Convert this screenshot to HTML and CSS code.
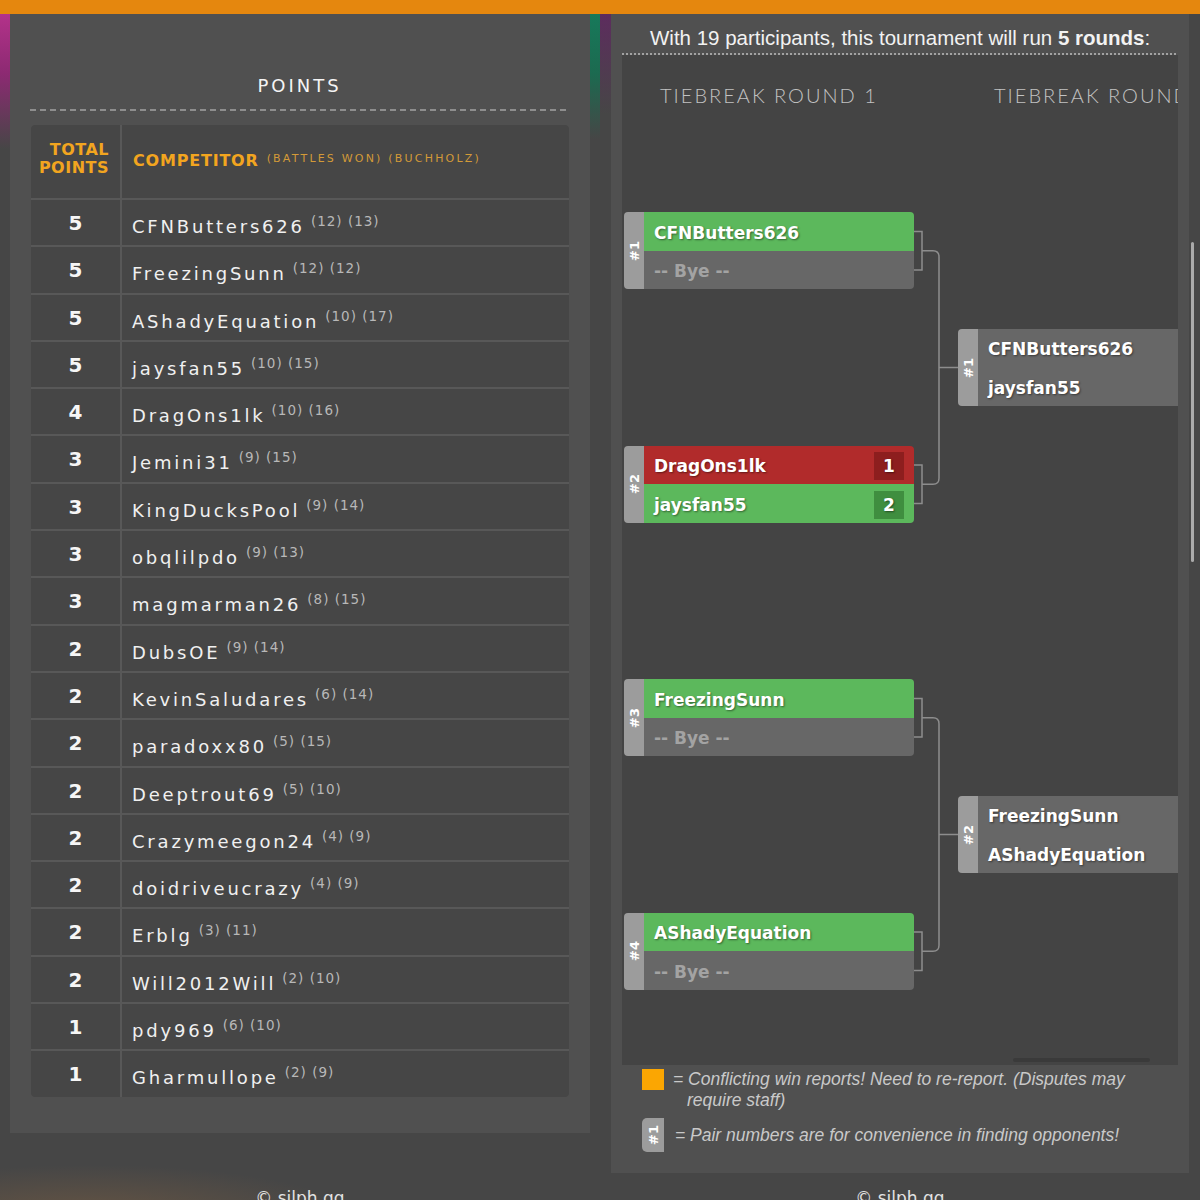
FILE: index.html
```html
<!DOCTYPE html>
<html lang="en">
<head>
<meta charset="utf-8">
<title>Tiebreak standings</title>
<link rel="stylesheet" href="styles.css">
</head>
<body>
<div class="topbar"></div>
<main class="page">
  <section class="panel points-panel">
    <h2 class="points-title">POINTS</h2>
    <div class="dash-rule"></div>
    <div class="standings">
      <div class="cell head-total">TOTAL<br>POINTS</div>
      <div class="cell head-comp"><span class="comp-label">COMPETITOR</span><span class="comp-sub">(BATTLES WON) (BUCHHOLZ)</span></div>

      <div class="cell pts">5</div><div class="cell name">CFNButters626<span class="tb">(12) (13)</span></div>
      <div class="cell pts">5</div><div class="cell name">FreezingSunn<span class="tb">(12) (12)</span></div>
      <div class="cell pts">5</div><div class="cell name">AShadyEquation<span class="tb">(10) (17)</span></div>
      <div class="cell pts">5</div><div class="cell name">jaysfan55<span class="tb">(10) (15)</span></div>
      <div class="cell pts">4</div><div class="cell name">DragOns1lk<span class="tb">(10) (16)</span></div>
      <div class="cell pts">3</div><div class="cell name">Jemini31<span class="tb">(9) (15)</span></div>
      <div class="cell pts">3</div><div class="cell name">KingDucksPool<span class="tb">(9) (14)</span></div>
      <div class="cell pts">3</div><div class="cell name">obqlilpdo<span class="tb">(9) (13)</span></div>
      <div class="cell pts">3</div><div class="cell name">magmarman26<span class="tb">(8) (15)</span></div>
      <div class="cell pts">2</div><div class="cell name">DubsOE<span class="tb">(9) (14)</span></div>
      <div class="cell pts">2</div><div class="cell name">KevinSaludares<span class="tb">(6) (14)</span></div>
      <div class="cell pts">2</div><div class="cell name">paradoxx80<span class="tb">(5) (15)</span></div>
      <div class="cell pts">2</div><div class="cell name">Deeptrout69<span class="tb">(5) (10)</span></div>
      <div class="cell pts">2</div><div class="cell name">Crazymeegon24<span class="tb">(4) (9)</span></div>
      <div class="cell pts">2</div><div class="cell name">doidriveucrazy<span class="tb">(4) (9)</span></div>
      <div class="cell pts">2</div><div class="cell name">Erblg<span class="tb">(3) (11)</span></div>
      <div class="cell pts">2</div><div class="cell name">Will2012Will<span class="tb">(2) (10)</span></div>
      <div class="cell pts">1</div><div class="cell name">pdy969<span class="tb">(6) (10)</span></div>
      <div class="cell pts">1</div><div class="cell name">Gharmullope<span class="tb">(2) (9)</span></div>
    </div>
  </section>

  <section class="panel bracket-panel">
    <p class="rounds-note">With 19 participants, this tournament will run <b>5 rounds</b>:</p>
    <div class="dot-rule"></div>
    <div class="bracket">
      <div class="rounds">
        <div class="round r1">
          <h3 class="round-title">TIEBREAK ROUND 1</h3>
          <div class="slot">
            <div class="match">
              <div class="pair"><span>#1</span></div>
              <div class="slots">
                <div class="p win">CFNButters626</div>
                <div class="p bye">-- Bye --</div>
              </div>
            </div>
          </div>
          <div class="slot">
            <div class="match">
              <div class="pair"><span>#2</span></div>
              <div class="slots">
                <div class="p lose">DragOns1lk<span class="score">1</span></div>
                <div class="p win">jaysfan55<span class="score">2</span></div>
              </div>
            </div>
          </div>
          <div class="slot">
            <div class="match">
              <div class="pair"><span>#3</span></div>
              <div class="slots">
                <div class="p win">FreezingSunn</div>
                <div class="p bye">-- Bye --</div>
              </div>
            </div>
          </div>
          <div class="slot">
            <div class="match">
              <div class="pair"><span>#4</span></div>
              <div class="slots">
                <div class="p win">AShadyEquation</div>
                <div class="p bye">-- Bye --</div>
              </div>
            </div>
          </div>
        </div>
        <div class="round r2">
          <h3 class="round-title">TIEBREAK ROUND 2</h3>
          <div class="slot">
            <div class="match">
              <div class="pair"><span>#1</span></div>
              <div class="slots">
                <div class="p">CFNButters626</div>
                <div class="p">jaysfan55</div>
              </div>
            </div>
          </div>
          <div class="slot">
            <div class="match">
              <div class="pair"><span>#2</span></div>
              <div class="slots">
                <div class="p">FreezingSunn</div>
                <div class="p">AShadyEquation</div>
              </div>
            </div>
          </div>
        </div>
      </div>
      <svg class="connectors" width="556" height="1010" viewBox="0 0 556 1010" fill="none" stroke="#8d8d8d" stroke-width="1.5">
        <path d="M292 176.5H300V215H292"/>
        <path d="M292 410H300V448.5H292"/>
        <path d="M300 195.75H311Q317 195.75 317 201.75V423.25Q317 429.25 311 429.25H300"/>
        <path d="M317 312.5H336"/>
        <path d="M292 643.5H300V682H292"/>
        <path d="M292 877H300V915.5H292"/>
        <path d="M300 662.75H311Q317 662.75 317 668.75V890.25Q317 896.25 311 896.25H300"/>
        <path d="M317 779.5H336"/>
      </svg>
      <div class="hscroll"></div>
    </div>
    <div class="legend">
      <div class="legend-item">
        <span class="swatch"></span>
        <span class="legend-text">= Conflicting win reports! Need to re-report. (Disputes may require staff)</span>
      </div>
      <div class="legend-item item-pair">
        <span class="pair-icon"><span>#1</span></span>
        <span class="legend-text">= Pair numbers are for convenience in finding opponents!</span>
      </div>
    </div>
  </section>
</main>
<footer class="footer"><span>© silph.gg</span><span>© silph.gg</span></footer>
<div class="vscroll"></div>
</body>
</html>
```

FILE: styles.css
```css
* { box-sizing: border-box; }

html, body { margin: 0; padding: 0; }

body {
  width: 1200px;
  height: 1200px;
  overflow: hidden;
  position: relative;
  font-family: "DejaVu Sans", sans-serif;
  color: #eeeeee;
  background-color: #464646;
  background-image:
    linear-gradient(to bottom, #b3328a 0px, #8c2a72 60px, rgba(70, 70, 70, 0) 135px),
    linear-gradient(to bottom, #17795a 0px, #1c6a50 60px, rgba(70, 70, 70, 0) 125px),
    linear-gradient(to bottom, #5d2c5e 0px, rgba(70, 70, 70, 0) 100px),
    radial-gradient(ellipse 260px 50px at 90px 1215px, rgba(125, 95, 65, 0.55), rgba(70, 70, 70, 0));
  background-repeat: no-repeat;
  background-position: 0 14px, 590px 14px, 600px 14px, 0 0;
  background-size: 10px 140px, 10px 130px, 11px 110px, 1200px 1200px;
}

.topbar {
  height: 14px;
  background: #e5870e;
}

.page {
  display: flex;
  align-items: flex-start;
  gap: 21px;
  padding-left: 10px;
}

.panel { background: #505050; }

/* ---------- Points panel ---------- */
.points-panel {
  width: 580px;
  height: 1119px;
  padding: 60px 21px 0 20px;
}

.points-title {
  margin: 0;
  text-align: center;
  font-size: 18px;
  line-height: 24px;
  font-weight: normal;
  letter-spacing: 3px;
  color: #f4f4f4;
}

.dash-rule {
  margin-top: 11px;
  height: 2px;
  background: repeating-linear-gradient(to right, #8e8e8e 0 6px, transparent 6px 10px);
}

.standings {
  margin-top: 14px;
  margin-left: 1px;
  width: 538px;
  display: grid;
  grid-template-columns: 89px 1fr;
  grid-template-rows: 73px;
  grid-auto-rows: 45.3px;
  gap: 2px;
  background: #585858;
  border-radius: 4px;
  overflow: hidden;
}

.cell { background: #464646; }

.head-total {
  display: flex;
  align-items: center;
  justify-content: flex-end;
  text-align: right;
  padding-right: 11px;
  padding-bottom: 6px;
  color: #f2a51f;
  font-weight: bold;
  font-size: 16px;
  line-height: 18px;
  letter-spacing: 0.5px;
}

.head-comp {
  display: flex;
  align-items: center;
  padding-left: 11px;
  padding-bottom: 2px;
}

.comp-label {
  color: #f2a51f;
  font-weight: bold;
  font-size: 16px;
  letter-spacing: 0.8px;
}

.comp-sub {
  color: #d39a38;
  font-size: 11px;
  letter-spacing: 2.2px;
  margin-left: 8px;
  position: relative;
  top: -2px;
}

.pts {
  text-align: center;
  line-height: 47px;
  font-weight: bold;
  font-size: 20px;
  color: #f6f6f6;
}

.name {
  padding-left: 10px;
  line-height: 42px;
  font-size: 18px;
  letter-spacing: 2.8px;
  color: #f0f0f0;
  white-space: nowrap;
}

.tb {
  font-size: 13.5px;
  letter-spacing: 1px;
  color: #b8b8b8;
  margin-left: 6px;
  vertical-align: 7px;
}

/* ---------- Bracket panel ---------- */
.bracket-panel {
  width: 578px;
  height: 1159px;
  padding: 12px 11px 0;
}

.rounds-note {
  margin: 0 0 0 28px;
  font-family: "Liberation Sans", Arial, sans-serif;
  font-size: 20.5px;
  line-height: 24px;
  color: #f2f2f2;
  white-space: nowrap;
}

.dot-rule {
  margin-top: 3px;
  height: 2px;
  background: repeating-linear-gradient(to right, #a2a2a2 0 2px, transparent 2px 4px);
}

.bracket {
  position: relative;
  height: 1010px;
  background: #444444;
  overflow: hidden;
}

.rounds {
  display: flex;
  gap: 44px;
  padding-left: 2px;
}

.round {
  width: 290px;
  flex-shrink: 0;
}

.round-title {
  margin: 0;
  height: 79px;
  padding: 28px 0 0 36px;
  font-family: Lato, "DejaVu Sans", sans-serif;
  font-weight: 300;
  font-size: 20px;
  line-height: 24px;
  letter-spacing: 2px;
  color: #c2c2c2;
  white-space: nowrap;
}

.slot {
  display: flex;
  align-items: center;
}

.r1 .slot { height: 233.5px; }
.r2 .slot { height: 467px; }

.match {
  display: flex;
  width: 290px;
  height: 77px;
  border-radius: 4px;
  overflow: hidden;
}

.pair {
  width: 20px;
  flex-shrink: 0;
  background: #9c9c9c;
  display: flex;
  align-items: center;
  justify-content: center;
}

.pair span,
.pair-icon span {
  writing-mode: vertical-rl;
  transform: rotate(180deg);
  font-weight: bold;
  font-size: 13px;
  color: #ffffff;
}

.slots {
  flex: 1;
  display: flex;
  flex-direction: column;
}

.p {
  height: 38.5px;
  display: flex;
  align-items: center;
  justify-content: space-between;
  padding: 0 10px 0 10px;
  padding-top: 2px;
  background: #676767;
  font-weight: bold;
  font-size: 17px;
  color: #ffffff;
  text-shadow: 1px 1px 2px rgba(0, 0, 0, 0.45);
  white-space: nowrap;
}

.p.win { background: #5cb85c; }
.p.lose { background: #b12b2b; }
.p.bye { color: #a3a3a3; text-shadow: none; }

.score {
  width: 30px;
  height: 28px;
  display: flex;
  align-items: center;
  justify-content: center;
}

.lose .score { background: #8d1e1e; }
.win .score { background: #3f8e3f; }

.connectors {
  position: absolute;
  top: 0;
  left: 0;
  pointer-events: none;
}

.hscroll {
  position: absolute;
  left: 391px;
  top: 1003px;
  width: 137px;
  height: 4px;
  border-radius: 2px;
  background: #3a3a3a;
}

/* ---------- Legend ---------- */
.legend {
  padding: 4px 0 0 20px;
  width: 514px;
  font-family: "Liberation Sans", Arial, sans-serif;
  font-style: italic;
  font-size: 17.5px;
  line-height: 21px;
  color: #c9c9c9;
}

.legend-item {
  display: flex;
  align-items: flex-start;
  gap: 9px;
}

.swatch {
  width: 22px;
  height: 21px;
  flex-shrink: 0;
  background: #fba602;
}

.legend-text {
  padding-left: 14px;
  text-indent: -14px;
}

.item-pair {
  margin-top: 7px;
  align-items: center;
  gap: 11px;
}

.item-pair .legend-text { padding-left: 0; text-indent: 0; }

.pair-icon {
  width: 22px;
  height: 34px;
  flex-shrink: 0;
  background: #9c9c9c;
  border-radius: 5px 0 0 5px;
  display: flex;
  align-items: center;
  justify-content: center;
  font-style: normal;
  font-family: "DejaVu Sans", sans-serif;
}

/* ---------- Footer ---------- */
.footer {
  display: flex;
  gap: 21px;
  padding-left: 10px;
  margin-top: 15px;
  font-size: 17px;
  line-height: 20px;
  color: #e2e2e2;
}

.footer span {
  width: 580px;
  text-align: center;
}

.footer span + span { width: 578px; }

.vscroll {
  position: absolute;
  left: 1191px;
  top: 242px;
  width: 3px;
  height: 320px;
  border-radius: 2px;
  background: #aaaaaa;
}
```
